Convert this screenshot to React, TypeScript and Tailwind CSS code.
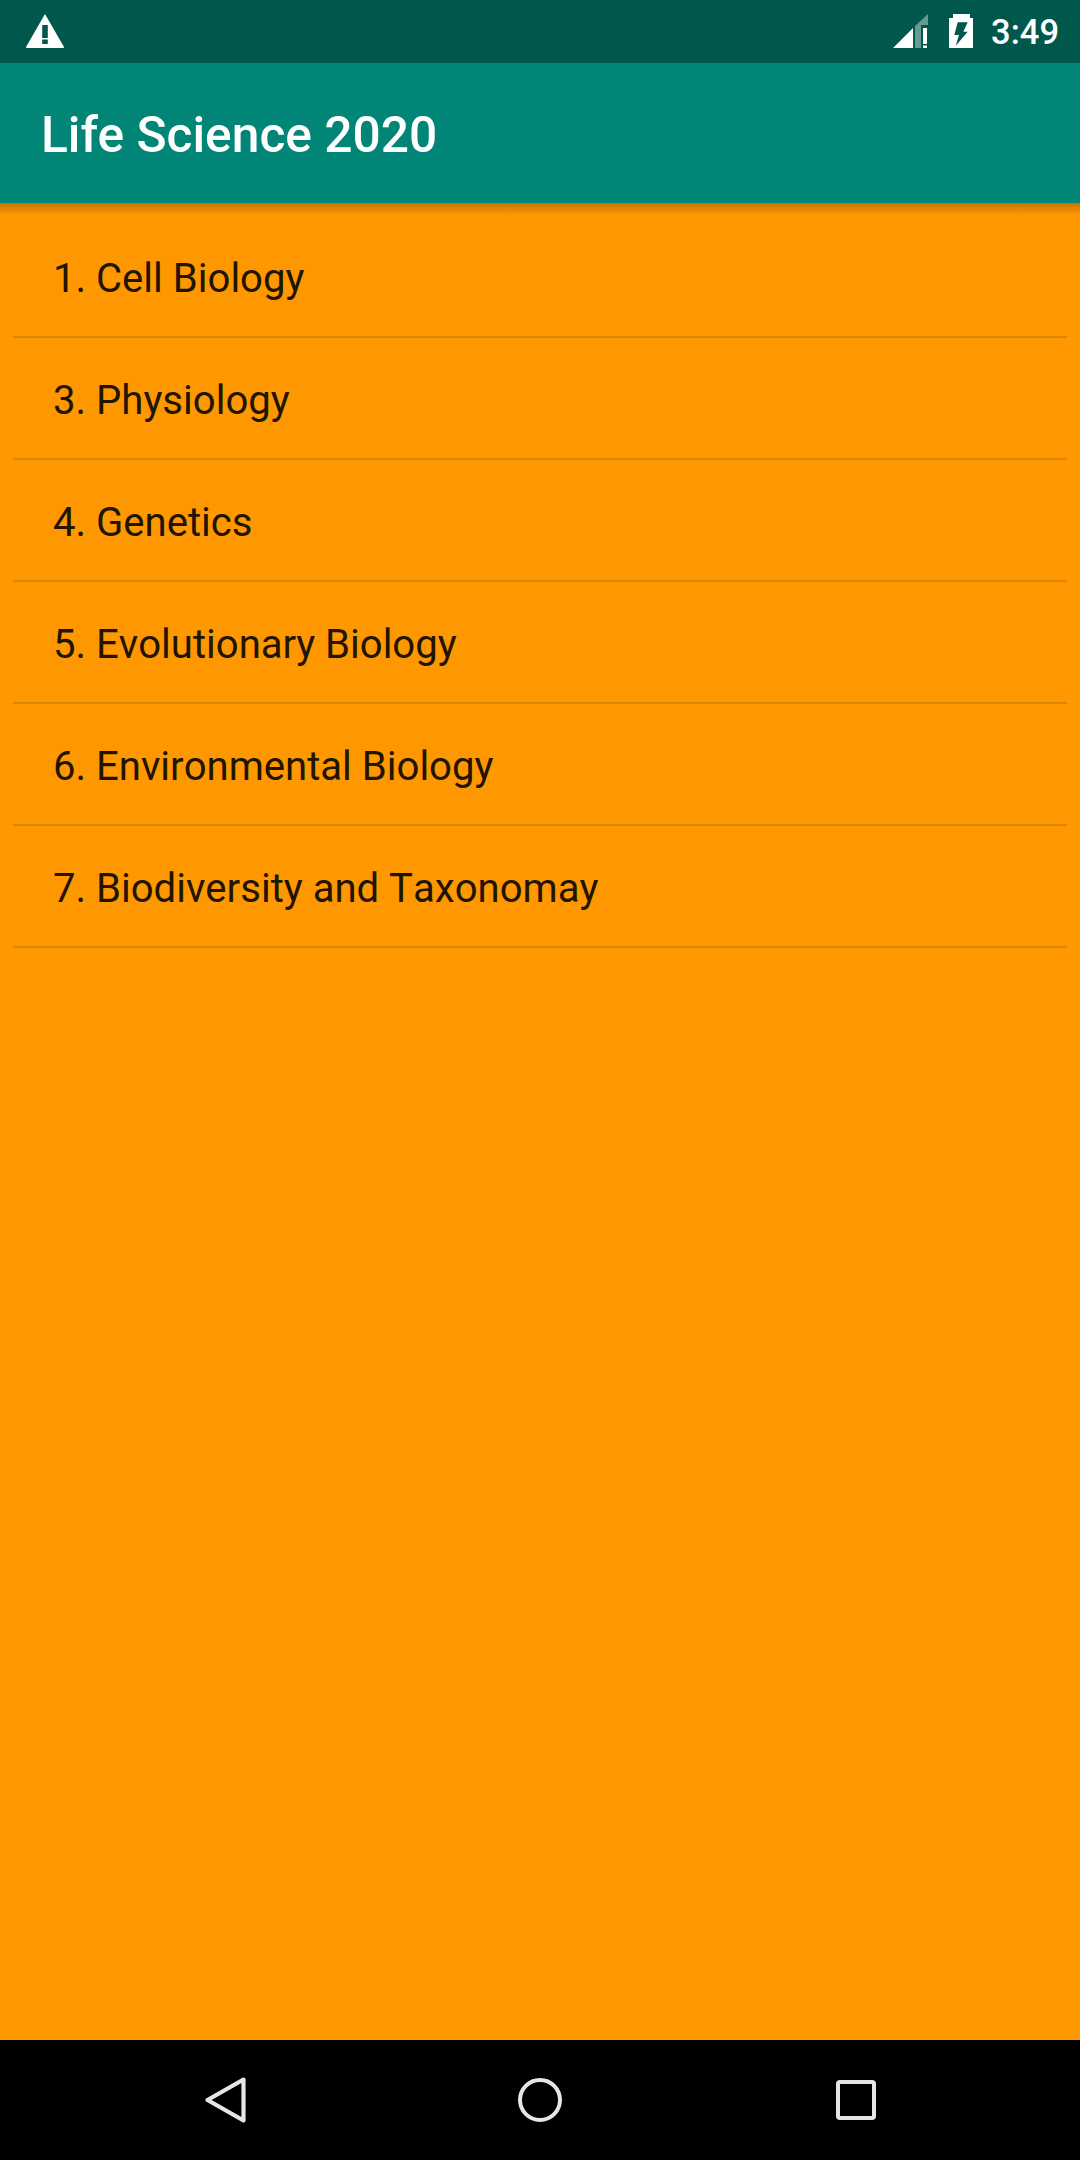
import React from 'react';

const topics = [
  '1. Cell Biology',
  '3. Physiology',
  '4. Genetics',
  '5. Evolutionary Biology',
  '6. Environmental Biology',
  '7. Biodiversity and Taxonomay',
];

const StatusBar = () => (
  <div className="h-[63px] shrink-0 bg-[#00574b] flex items-center pl-[26px] pr-[21px]">
    <svg viewBox="0 0 38 34" className="w-[38px] h-[34px] mt-[-1px]">
      <path d="M19 0 L38 33 Q38 34 37 34 L1 34 Q0 34 0 33 Z" fill="#ffffff" />
      <rect x="16.2" y="11" width="5.6" height="13" fill="#00574b" />
      <rect x="16.2" y="25.5" width="5.6" height="4.5" fill="#00574b" />
    </svg>
    <div className="flex-1" />
    <svg viewBox="0 0 35 34" className="w-[35px] h-[34px] mt-[-1px]">
      <path d="M0 34 L20 14 V34 Z" fill="#ffffff" />
      <path d="M22 12 L35 0 V11 H28 V34 H22 Z" fill="#ffffff" fillOpacity="0.4" />
      <rect x="30" y="14" width="4" height="16" fill="#ffffff" />
      <rect x="30" y="31.5" width="4" height="2.5" fill="#ffffff" />
    </svg>
    <svg viewBox="0 0 24 34" className="w-[24px] h-[34px] ml-[21px] mt-[-1px]">
      <path d="M4 4 V0 H21 V4 H24 V34 H0 V4 Z" fill="#ffffff" />
      <path d="M8.7 8.3 H18.7 L14.3 17.7 H18.7 L6.7 31.7 L10 21 H5.3 Z" fill="#00574b" />
    </svg>
    <span className="ml-[18px] mt-[1px] text-[34.5px] leading-none font-medium text-white">3:49</span>
  </div>
);

const NavBar = () => (
  <div className="h-[120px] shrink-0 bg-black flex items-center pl-[205px]">
    <svg viewBox="0 0 42 46" className="w-[42px] h-[46px]">
      <path d="M38.5 2.5 L2.5 23 L38.5 43.5 Z" fill="none" stroke="#e6e6e6" strokeWidth="4.2" strokeLinejoin="round" />
    </svg>
    <svg viewBox="0 0 44 44" className="w-[44px] h-[44px] ml-[271px]">
      <circle cx="22" cy="22" r="20" fill="none" stroke="#e6e6e6" strokeWidth="4" />
    </svg>
    <svg viewBox="0 0 40 40" className="w-[40px] h-[40px] ml-[274px]">
      <rect x="2" y="2" width="36" height="36" rx="2" fill="none" stroke="#e6e6e6" strokeWidth="4" />
    </svg>
  </div>
);

export default function App() {
  return (
    <div className="w-[1080px] h-[2160px] flex flex-col bg-[#ff9800] font-['Roboto',sans-serif]">
      <StatusBar />
      <header className="h-[140px] shrink-0 bg-[#008577] flex items-center pl-[41px] pt-[5px]">
        <h1 className="text-[49.7px] leading-none font-medium text-white">Life Science 2020</h1>
      </header>
      <main className="relative flex-1 pt-[13px] pl-[13px] pr-[13px]">
        <div className="absolute inset-x-0 top-0 h-[12px] bg-gradient-to-b from-[#c87400] to-[#ff9800]" />
        <ul className="relative">
          {topics.map((topic) => (
            <li
              key={topic}
              className="h-[122px] flex items-center pl-[40px] pt-[6px] border-b-2 border-[#d98600] text-[40.1px] [font-kerning:none] text-[#211400]"
            >
              {topic}
            </li>
          ))}
        </ul>
      </main>
      <NavBar />
    </div>
  );
}
